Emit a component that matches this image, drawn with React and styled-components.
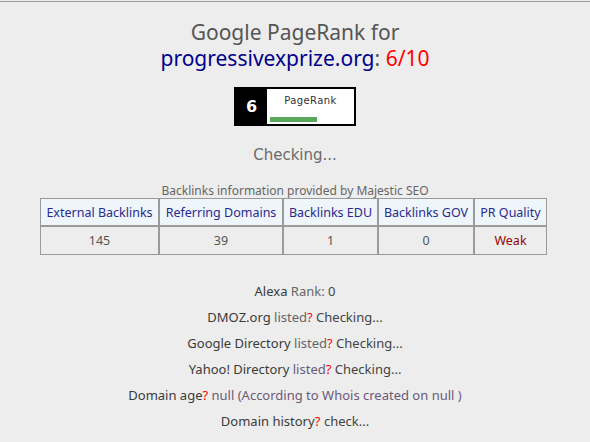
import React from 'react';
import styled, { createGlobalStyle } from 'styled-components';

const GlobalStyle = createGlobalStyle`
  html, body {
    margin: 0;
    padding: 0;
    background: #ededed;
  }
  body {
    font-family: "Noto Sans", "Open Sans", sans-serif;
    color: #555;
  }
`;

const Page = styled.div`
  border-top: 1px solid #9a9a9a;
  margin-top: 1px;
  min-height: 440px;
  display: flex;
  flex-direction: column;
  align-items: center;
  padding-top: 17px;
  box-sizing: border-box;
`;

const Title = styled.h1`
  margin: 0;
  font-size: 21px;
  font-weight: normal;
  line-height: 26px;
  text-align: center;
  color: #555;
`;

const Domain = styled.span`
  color: #00008b;
`;

const Score = styled.span`
  color: #ff0000;
`;

const Badge = styled.div`
  margin-top: 16px;
  display: flex;
  width: 122px;
  height: 39px;
  border: 2px solid #000;
  box-sizing: border-box;
  background: #fff;
`;

const BadgeNum = styled.div`
  width: 31px;
  background: #000;
  color: #fff;
  font-family: "DejaVu Sans", sans-serif;
  font-weight: bold;
  font-size: 16px;
  display: flex;
  align-items: center;
  justify-content: center;
`;

const BadgeBody = styled.div`
  flex: 1;
  display: flex;
  flex-direction: column;
  padding: 5px 0 0 3px;
`;

const BadgeLabel = styled.div`
  font-family: "DejaVu Sans", sans-serif;
  font-size: 10px;
  color: #333;
  letter-spacing: 0.4px;
  text-align: center;
  padding-right: 3px;
  line-height: 14px;
`;

const BadgeBar = styled.div`
  margin-top: 9px;
  height: 5px;
  background: #5aa75e;
`;

const Status = styled.div`
  margin-top: 20px;
  font-family: "DejaVu Sans", sans-serif;
  font-size: 15px;
  color: #6a6a6a;
`;

const Provider = styled.div`
  margin-top: 19px;
  font-size: 12px;
  color: #666;
  line-height: 15px;
`;

const Table = styled.table`
  border-collapse: separate;
  border-spacing: 0;
  width: 507px;
  margin-right: 3px;
  font-size: 12.5px;
`;

const Th = styled.th`
  border: 1px solid #9a9a9a;
  background: #eef6fc;
  color: #2a2a8a;
  font-weight: normal;
  height: 28px;
  padding: 0 3px;
  white-space: nowrap;
  width: ${p => p.w}px;
  box-sizing: border-box;
`;

const Td = styled.td`
  border: 1px solid #9a9a9a;
  text-align: center;
  height: 27px;
  padding: 0;
  color: ${p => (p.weak ? '#990000' : '#555')};
`;

const InfoList = styled.div`
  margin-top: 27px;
  display: flex;
  flex-direction: column;
  align-items: center;
  gap: 7px;
  font-size: 13px;
  line-height: 19px;
`;

const Row = styled.div`
  color: #666;
`;

const Label = styled.span`
  color: #3a3a3a;
`;

const Muted = styled.span`
  color: ${p => (p.purple ? '#6a5a7a' : '#666')};
`;

const Q = styled.span`
  color: #ff0000;
`;

const Value = styled.span`
  color: #444;
`;

const columns = [
  { title: 'External Backlinks', w: 119, value: '145' },
  { title: 'Referring Domains', w: 124, value: '39' },
  { title: 'Backlinks EDU', w: 95, value: '1' },
  { title: 'Backlinks GOV', w: 96, value: '0' },
  { title: 'PR Quality', w: 73, value: 'Weak', weak: true },
];

export default function App() {
  return (
    <>
      <GlobalStyle />
      <Page>
        <Title>
          Google PageRank for
          <br />
          <Domain>progressivexprize.org</Domain>: <Score>6/10</Score>
        </Title>

        <Badge>
          <BadgeNum>6</BadgeNum>
          <BadgeBody>
            <BadgeLabel>PageRank</BadgeLabel>
            <BadgeBar style={{ width: `${(6 / 10) * 78}px` }} />
          </BadgeBody>
        </Badge>

        <Status>Checking...</Status>

        <Provider>Backlinks information provided by Majestic SEO</Provider>
        <Table>
          <thead>
            <tr>
              {columns.map(c => (
                <Th key={c.title} w={c.w}>{c.title}</Th>
              ))}
            </tr>
          </thead>
          <tbody>
            <tr>
              {columns.map(c => (
                <Td key={c.title} weak={c.weak}>{c.value}</Td>
              ))}
            </tr>
          </tbody>
        </Table>

        <InfoList>
          <Row>
            <Label>Alexa</Label> Rank: <Value>0</Value>
          </Row>
          <Row>
            <Label>DMOZ.org</Label> listed<Q>?</Q> <Value>Checking...</Value>
          </Row>
          <Row>
            <Label>Google Directory</Label> listed<Q>?</Q> <Value>Checking...</Value>
          </Row>
          <Row>
            <Label>Yahoo! Directory</Label> <Muted purple>listed</Muted><Q>?</Q> <Value>Checking...</Value>
          </Row>
          <Row>
            <Label>Domain age</Label><Q>?</Q> <Muted purple>null (According to Whois created on null )</Muted>
          </Row>
          <Row>
            <Label>Domain history</Label><Q>?</Q> <Value>check...</Value>
          </Row>
        </InfoList>
      </Page>
    </>
  );
}
